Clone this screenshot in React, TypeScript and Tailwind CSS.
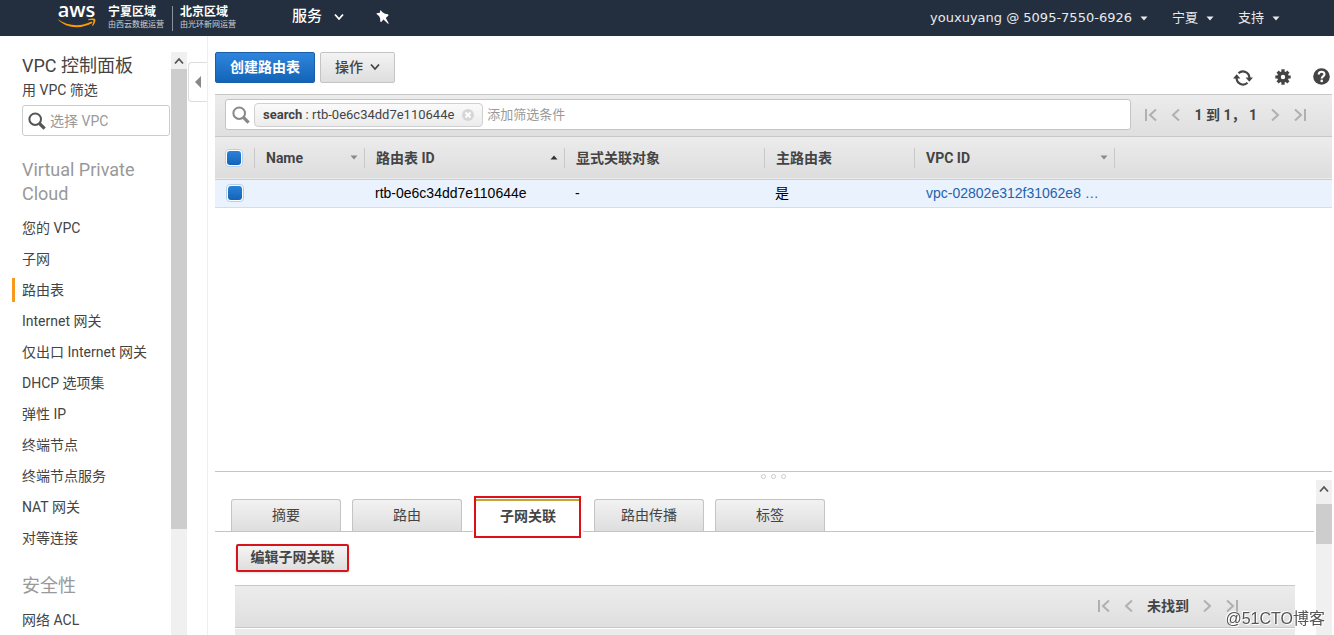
import { useState } from 'react'

const vpcLinks = [
  '您的 VPC', '子网', '路由表', 'Internet 网关', '仅出口 Internet 网关', 'DHCP 选项集',
  '弹性 IP', '终端节点', '终端节点服务', 'NAT 网关', '对等连接',
]
const securityLinks = ['网络 ACL']
const tabs = ['摘要', '路由', '子网关联', '路由传播', '标签']

const columns = [
  { label: 'Name', sort: 'down' },
  { label: '路由表 ID', sort: 'up' },
  { label: '显式关联对象', sort: '' },
  { label: '主路由表', sort: '' },
  { label: 'VPC ID', sort: 'down' },
]

function Caret({ className = '' }) {
  return (
    <svg viewBox="0 0 8 5" className={`w-2 h-[5px] ${className}`} fill="currentColor" aria-hidden="true">
      <path d="M.5 .5h7L4 4.500z" />
    </svg>
  )
}

function Chevron({ className = '' }) {
  return (
    <svg viewBox="0 0 10 8" className={`w-2.5 h-2 ${className}`} fill="none" stroke="currentColor" strokeWidth="1.800" aria-hidden="true">
      <path d="M1 1.500l4 4.500 4-4.500" />
    </svg>
  )
}

function SearchIcon({ className = '' }) {
  return (
    <svg viewBox="0 0 18 18" className={`w-[18px] h-[18px] shrink-0 ${className}`} fill="none" stroke="currentColor" aria-hidden="true">
      <circle cx="7.2" cy="7.2" r="5.8" strokeWidth="2" />
      <path d="M11.6 11.6l5 5" strokeWidth="3.2" />
    </svg>
  )
}

function PagerIcon({ d, wide = false }: { d: string; wide?: boolean }) {
  return (
    <svg viewBox={wide ? '0 0 12 14' : '0 0 9 14'} className={wide ? 'w-3 h-3.5' : 'w-[9px] h-3.5'}
      fill="none" stroke="currentColor" strokeWidth="2" aria-hidden="true">
      <path d={d} />
    </svg>
  )
}

function Pager({ label }: { label: string }) {
  return (
    <div className="flex items-center gap-3.5 mb-0.5 shrink-0 text-[#b0b0b0]">
      <button aria-label="第一页"><PagerIcon wide d="M1 1v12M11 1.5L5 7l6 5.5" /></button>
      <button aria-label="上一页"><PagerIcon d="M8 1.5L2 7l6 5.5" /></button>
      <span className="text-sm font-bold text-[#444] whitespace-pre">{label}</span>
      <button aria-label="下一页"><PagerIcon d="M1 1.5L7 7l-6 5.5" /></button>
      <button aria-label="最后一页"><PagerIcon wide d="M11 1v12M1 1.5L7 7l-6 5.5" /></button>
    </div>
  )
}

function Check({ label, checked, onChange }: { label: string; checked: boolean; onChange: () => void }) {
  return (
    <label className="flex items-center justify-center w-[18px] h-[18px] rounded border border-[#b9cfe4] bg-white">
      <input type="checkbox" aria-label={label} checked={checked} onChange={onChange}
        className="block appearance-none w-3.5 h-3.5 rounded-[3px] checked:bg-linear-to-b from-[#2a82d8] to-[#1264b8]" />
    </label>
  )
}

function SideLink({ label, active }: { label: string; active: boolean }) {
  return (
    <li className="flex items-center h-6">
      <span className={active ? 'w-[3px] h-6 mr-[7px] bg-[#f7981f]' : 'w-[3px] h-6 mr-[7px]'} />
      <a href="#" className="whitespace-nowrap">{label}</a>
    </li>
  )
}

function Sidebar() {
  return (
    <aside className="flex shrink-0 w-[208px] border-r border-[#eee] overflow-hidden">
      <nav className="w-[170px] shrink-0 pl-3 pt-[18px] text-sm text-[#444]">
        <h1 className="pl-2.5 text-lg leading-6">VPC 控制面板</h1>
        <label htmlFor="vpc" className="block pl-2.5 leading-6">用 VPC 筛选</label>
        <div className="ml-2.5 mt-[3px] flex items-center gap-1 h-[31px] pl-[5px] border border-[#ccc] rounded-[3px]">
          <SearchIcon className="text-[#555]" />
          <input id="vpc" placeholder="选择 VPC" className="min-w-0 flex-1 outline-none placeholder:text-[#999]" />
        </div>
        <h2 className="pl-2.5 mt-[22px] text-lg leading-6 text-[#999]">Virtual Private Cloud</h2>
        <ul className="mt-2.5 flex flex-col gap-[7px]">
          {vpcLinks.map(l => <SideLink key={l} label={l} active={l === '路由表'} />)}
        </ul>
        <h2 className="pl-2.5 mt-6 text-lg leading-6 text-[#999]">安全性</h2>
        <ul className="mt-2.5 flex flex-col gap-[7px]">
          {securityLinks.map(l => <SideLink key={l} label={l} active={false} />)}
        </ul>
      </nav>
      <div className="mt-4 ml-px w-4 shrink-0 bg-[#f0f0f0] flex flex-col items-center">
        <div className="h-[17px] flex items-center text-[#555]"><Chevron className="rotate-180" /></div>
        <div className="w-full h-[460px] bg-[#cdcdcd]" />
      </div>
      <button aria-label="收起" className="mt-[26px] ml-px flex-1 h-10 border border-r-0 border-[#ddd] rounded-l flex items-center justify-center">
        <svg viewBox="0 0 6 12" className="w-1.5 h-3" fill="#888" aria-hidden="true"><path d="M6 0v12L0 6z" /></svg>
      </button>
    </aside>
  )
}

function Header() {
  return (
    <header className="h-9 shrink-0 bg-[#232f3e] text-white flex items-center pl-[57px] pr-[54px]">
      <a href="#" aria-label="AWS" className="w-[39px] h-9 flex flex-col items-center">
        <span className="h-5 text-[20px] leading-5 font-['Open_Sans'] font-semibold">aws</span>
        <svg viewBox="0 0 39 10" className="w-[39px] h-2.5 -mt-0.5" aria-hidden="true">
          <path d="M0.500 1C11 8.500 24 9 34.500 3.500L35.500 5C24 11.500 8.500 10.500 0.500 1z" fill="#f90" />
          <path d="M31 1.500c3-1.200 6-1.200 7-.6s.2 4.500-2.200 7l-.8-.3c1-2.200 1.700-4.300 1.300-5s-3-.5-5.200-.3z" fill="#f90" />
        </svg>
      </a>
      <div className="ml-3 pr-2 border-r border-[#8a929c]">
        <p className="text-xs leading-[13px] font-bold">宁夏区域</p>
        <p className="text-[8px] leading-3 text-[#cdd1d6]">由西云数据运营</p>
      </div>
      <div className="ml-[7px]">
        <p className="text-xs leading-[13px] font-bold">北京区域</p>
        <p className="text-[8px] leading-3 text-[#cdd1d6]">由光环新网运营</p>
      </div>
      <div className="ml-14 mb-[3px] flex items-center gap-8">
        <button className="flex items-center gap-3 text-[15px] font-medium">服务 <Chevron /></button>
        <button aria-label="固定">
          <svg viewBox="0 0 14 16" className="w-3.5 h-4" fill="#fff" aria-hidden="true">
            <path d="M4.500 1L6.500 3.200 9 4.800 12 5.200 12.500 6.500 9.800 9 12.800 14.500 12 14.800 7.500 10.600 5.200 13 4.200 12.600V9.600L3 7 .8 5.200.5 4.200 3.800 3.800z" />
          </svg>
        </button>
      </div>
      <div className="ml-auto flex items-center gap-6 text-[13px] text-[#e8eaec]">
        <button className="flex items-center gap-2 font-['DejaVu_Sans']">youxuyang @ 5095-7550-6926 <Caret /></button>
        <button className="flex items-center gap-2">宁夏 <Caret /></button>
        <button className="flex items-center gap-2">支持 <Caret /></button>
      </div>
    </header>
  )
}

function Toolbar() {
  return (
    <div className="flex items-start h-[58px] pt-4">
      <button className="h-[31px] w-[100px] pb-0.5 rounded-xs border border-[#1a5ea8] bg-linear-to-b from-[#2f85dd] to-[#1264b8] text-white text-sm font-bold">创建路由表</button>
      <button className="ml-[5px] h-[31px] w-[75px] pb-0.5 rounded-xs border border-[#c4c4c4] bg-linear-to-b from-[#f3f3f3] to-[#dedede] text-sm font-medium flex items-center justify-center gap-[7px]">
        操作 <Chevron />
      </button>
      <div className="ml-auto mt-4 pr-0.5 flex items-center gap-[22px] text-[#444]">
        <button aria-label="刷新">
          <svg viewBox="0 0 20 18" className="w-5 h-[18px]" aria-hidden="true">
            <path d="M5.500 4.200A6.500 6.500 0 0 1 16.400 9M14.500 13.800A6.500 6.500 0 0 1 3.600 9" fill="none" stroke="currentColor" strokeWidth="2.200" />
            <path d="M12.600 8.600H20l-3.700 4.200zM7.400 9.400H0l3.700-4.200z" fill="currentColor" />
          </svg>
        </button>
        <button aria-label="设置">
          <svg viewBox="0 0 16 16" className="w-4 h-4 mb-0.5" fill="none" stroke="currentColor" aria-hidden="true">
            <circle cx="8" cy="8" r="4" strokeWidth="3.600" />
            <path d="M8 .3v3M8 12.700v3M.3 8h3M12.700 8h3M2.600 2.600l2 2M11.400 11.400l2 2M13.400 2.600l-2 2M4.600 11.400l-2 2" strokeWidth="3.200" />
          </svg>
        </button>
        <button aria-label="帮助">
          <svg viewBox="0 0 17 17" className="w-[17px] h-[17px] mb-0.5" aria-hidden="true">
            <circle cx="8.500" cy="8.500" r="8.300" fill="currentColor" />
            <path d="M5.700 6.500c0-3.600 5.800-3.600 5.800-.2 0 2-2.800 2.200-2.800 4.100" fill="none" stroke="#fff" strokeWidth="2.100" />
            <circle cx="8.700" cy="12.900" r="1.300" fill="#fff" />
          </svg>
        </button>
      </div>
    </div>
  )
}

export default function App() {
  const [tab, setTab] = useState('子网关联')
  const [selected, setSelected] = useState(true)
  const toggle = () => setSelected(!selected)

  return (
    <div className="h-screen flex flex-col overflow-hidden bg-white text-[#444] font-['Roboto','Noto_Sans_CJK_SC',sans-serif]">
      <Header />
      <div className="flex flex-1 min-h-0">
        <Sidebar />
        <main className="flex-1 min-w-0 flex flex-col pl-[7px] pr-0.5">
          <Toolbar />

          <div className="h-[43px] shrink-0 flex items-center gap-3.5 pl-2.5 pr-[26px] border-y border-[#c8c8c8] bg-linear-to-b from-[#ececec] to-[#dfdfdf]">
            <div className="flex-1 h-[31px] mb-0.5 flex items-center pl-1.5 border border-[#c4c4c4] rounded-[3px] bg-white">
              <SearchIcon className="text-[#888]" />
              <span className="ml-1 h-6 px-2 flex items-center border border-[#d0d0d0] rounded bg-linear-to-b from-[#fafafa] to-[#ececec] text-[13px] whitespace-pre">
                <b>search</b> : rtb-0e6c34dd7e110644e
                <button aria-label="移除" className="ml-2">
                  <svg viewBox="0 0 12 12" className="w-3 h-3" aria-hidden="true">
                    <circle cx="6" cy="6" r="6" fill="#d6d6d6" />
                    <path d="M3.500 3.500l5 5M8.500 3.500l-5 5" stroke="#fff" strokeWidth="2" />
                  </svg>
                </button>
              </span>
              <input aria-label="筛选" placeholder="添加筛选条件" className="ml-1 flex-1 min-w-0 text-[13px] outline-none placeholder:text-[#999]" />
            </div>
            <Pager label="1 到 1， 1" />
          </div>

          <div className="flex-1 min-h-0 overflow-hidden">
            <table className="w-full table-fixed border-collapse text-sm text-left">
              <colgroup>
                <col className="w-10" />
                <col className="w-[110px]" />
                <col className="w-[200px]" />
                <col className="w-[200px]" />
                <col className="w-[150px]" />
                <col className="w-[200px]" />
                <col />
              </colgroup>
              <thead>
                <tr className="h-[42px] bg-linear-to-b from-[#ececec] to-[#dddddd] border-b border-[#c5cfdb]">
                  <th className="p-0">
                    <div className="h-5 pl-2.5 flex items-center border-r border-[#c8c8c8]">
                      <Check label="全选" checked={selected} onChange={toggle} />
                    </div>
                  </th>
                  {columns.map(c => (
                    <th key={c.label} className="p-0 font-bold">
                      <div className="h-5 pl-[11px] pr-1.5 flex items-center justify-between border-r border-[#c8c8c8]">
                        {c.label}
                        {c.sort === 'down' && <Caret className="text-[#888]" />}
                        {c.sort === 'up' && <Caret className="text-[#333] rotate-180" />}
                      </div>
                    </th>
                  ))}
                  <th className="p-0" />
                </tr>
              </thead>
              <tbody className="font-['Liberation_Sans','Noto_Sans_CJK_SC',sans-serif] text-black">
                <tr className="h-7 bg-[#e9f2fd] border-b border-[#cfdfee]">
                  <td className="py-0 pl-[11px]"><Check label="选择路由表" checked={selected} onChange={toggle} /></td>
                  <td />
                  <td className="py-0 pl-2.5">rtb-0e6c34dd7e110644e</td>
                  <td className="py-0 pl-2.5">-</td>
                  <td className="py-0 pl-2.5">是</td>
                  <td className="py-0 pl-[11px]"><a href="#" className="text-[#1f62ad]">vpc-02802e312f31062e8 …</a></td>
                  <td />
                </tr>
              </tbody>
            </table>
          </div>

          <section className="shrink-0 border-t border-[#c4c4c4]">
            <div className="h-2 flex justify-center items-center gap-[5px]">
              <i className="w-[5px] h-[5px] border border-[#ccc] rounded-full" />
              <i className="w-[5px] h-[5px] border border-[#ccc] rounded-full" />
              <i className="w-[5px] h-[5px] border border-[#ccc] rounded-full" />
            </div>
            <div className="flex">
              <div className="flex-1 min-w-0 mr-0.5">
                <div role="tablist" className="flex items-end gap-[11px] pt-[19px] pl-4 border-b border-[#c4c4c4]">
                  {tabs.map(t => (
                    <button key={t} role="tab" aria-selected={t === tab} onClick={() => setTab(t)}
                      className={t === tab
                        ? 'relative w-[110px] h-[33px] -mb-px bg-white text-sm font-bold'
                        : 'relative w-[110px] h-8 pb-0.5 bg-linear-to-b from-[#f2f2f2] to-[#dedede] border border-b-0 border-[#c4c4c4] rounded-t-[3px] text-sm'}>
                      {t}
                      {t === tab && <span className="absolute top-0 inset-x-[3px] h-0.5 bg-[#c9a13b]" />}
                      {t === '子网关联' && <span className="absolute -top-[3px] left-px w-[107px] h-[42px] border-2 border-[#dd1016]" />}
                    </button>
                  ))}
                </div>
                <div className="pl-[21px] pr-[19px] pt-3">
                  <button className="h-7 w-[113px] pb-0.5 border-2 border-[#d5141b] rounded-xs bg-linear-to-b from-[#f5f5f5] to-[#dedede] shadow-sm text-sm font-bold flex items-center justify-center">编辑子网关联</button>
                  <div className="-ml-px mt-[13px] h-[43px] flex items-center justify-end pr-[57px] border-y border-[#c8c8c8] bg-linear-to-b from-[#ececec] to-[#dfdfdf]">
                    <Pager label="未找到" />
                  </div>
                  <div className="-ml-px mt-px h-1.5 bg-[#ebebeb]" />
                </div>
              </div>
              <div className="w-4 shrink-0 bg-[#f0f0f0] flex flex-col items-center">
                <div className="h-6 pb-1.5 flex items-center text-[#555]"><Chevron className="rotate-180" /></div>
                <div className="w-full h-10 bg-[#cdcdcd]" />
              </div>
            </div>
          </section>
        </main>
      </div>
      <span className="fixed right-[9px] bottom-1 text-base text-[#555] font-['Liberation_Sans','Noto_Sans_CJK_SC',sans-serif] [text-shadow:1px_1px_0_#fff,-1px_-1px_0_#fff]">@51CTO博客</span>
    </div>
  )
}
